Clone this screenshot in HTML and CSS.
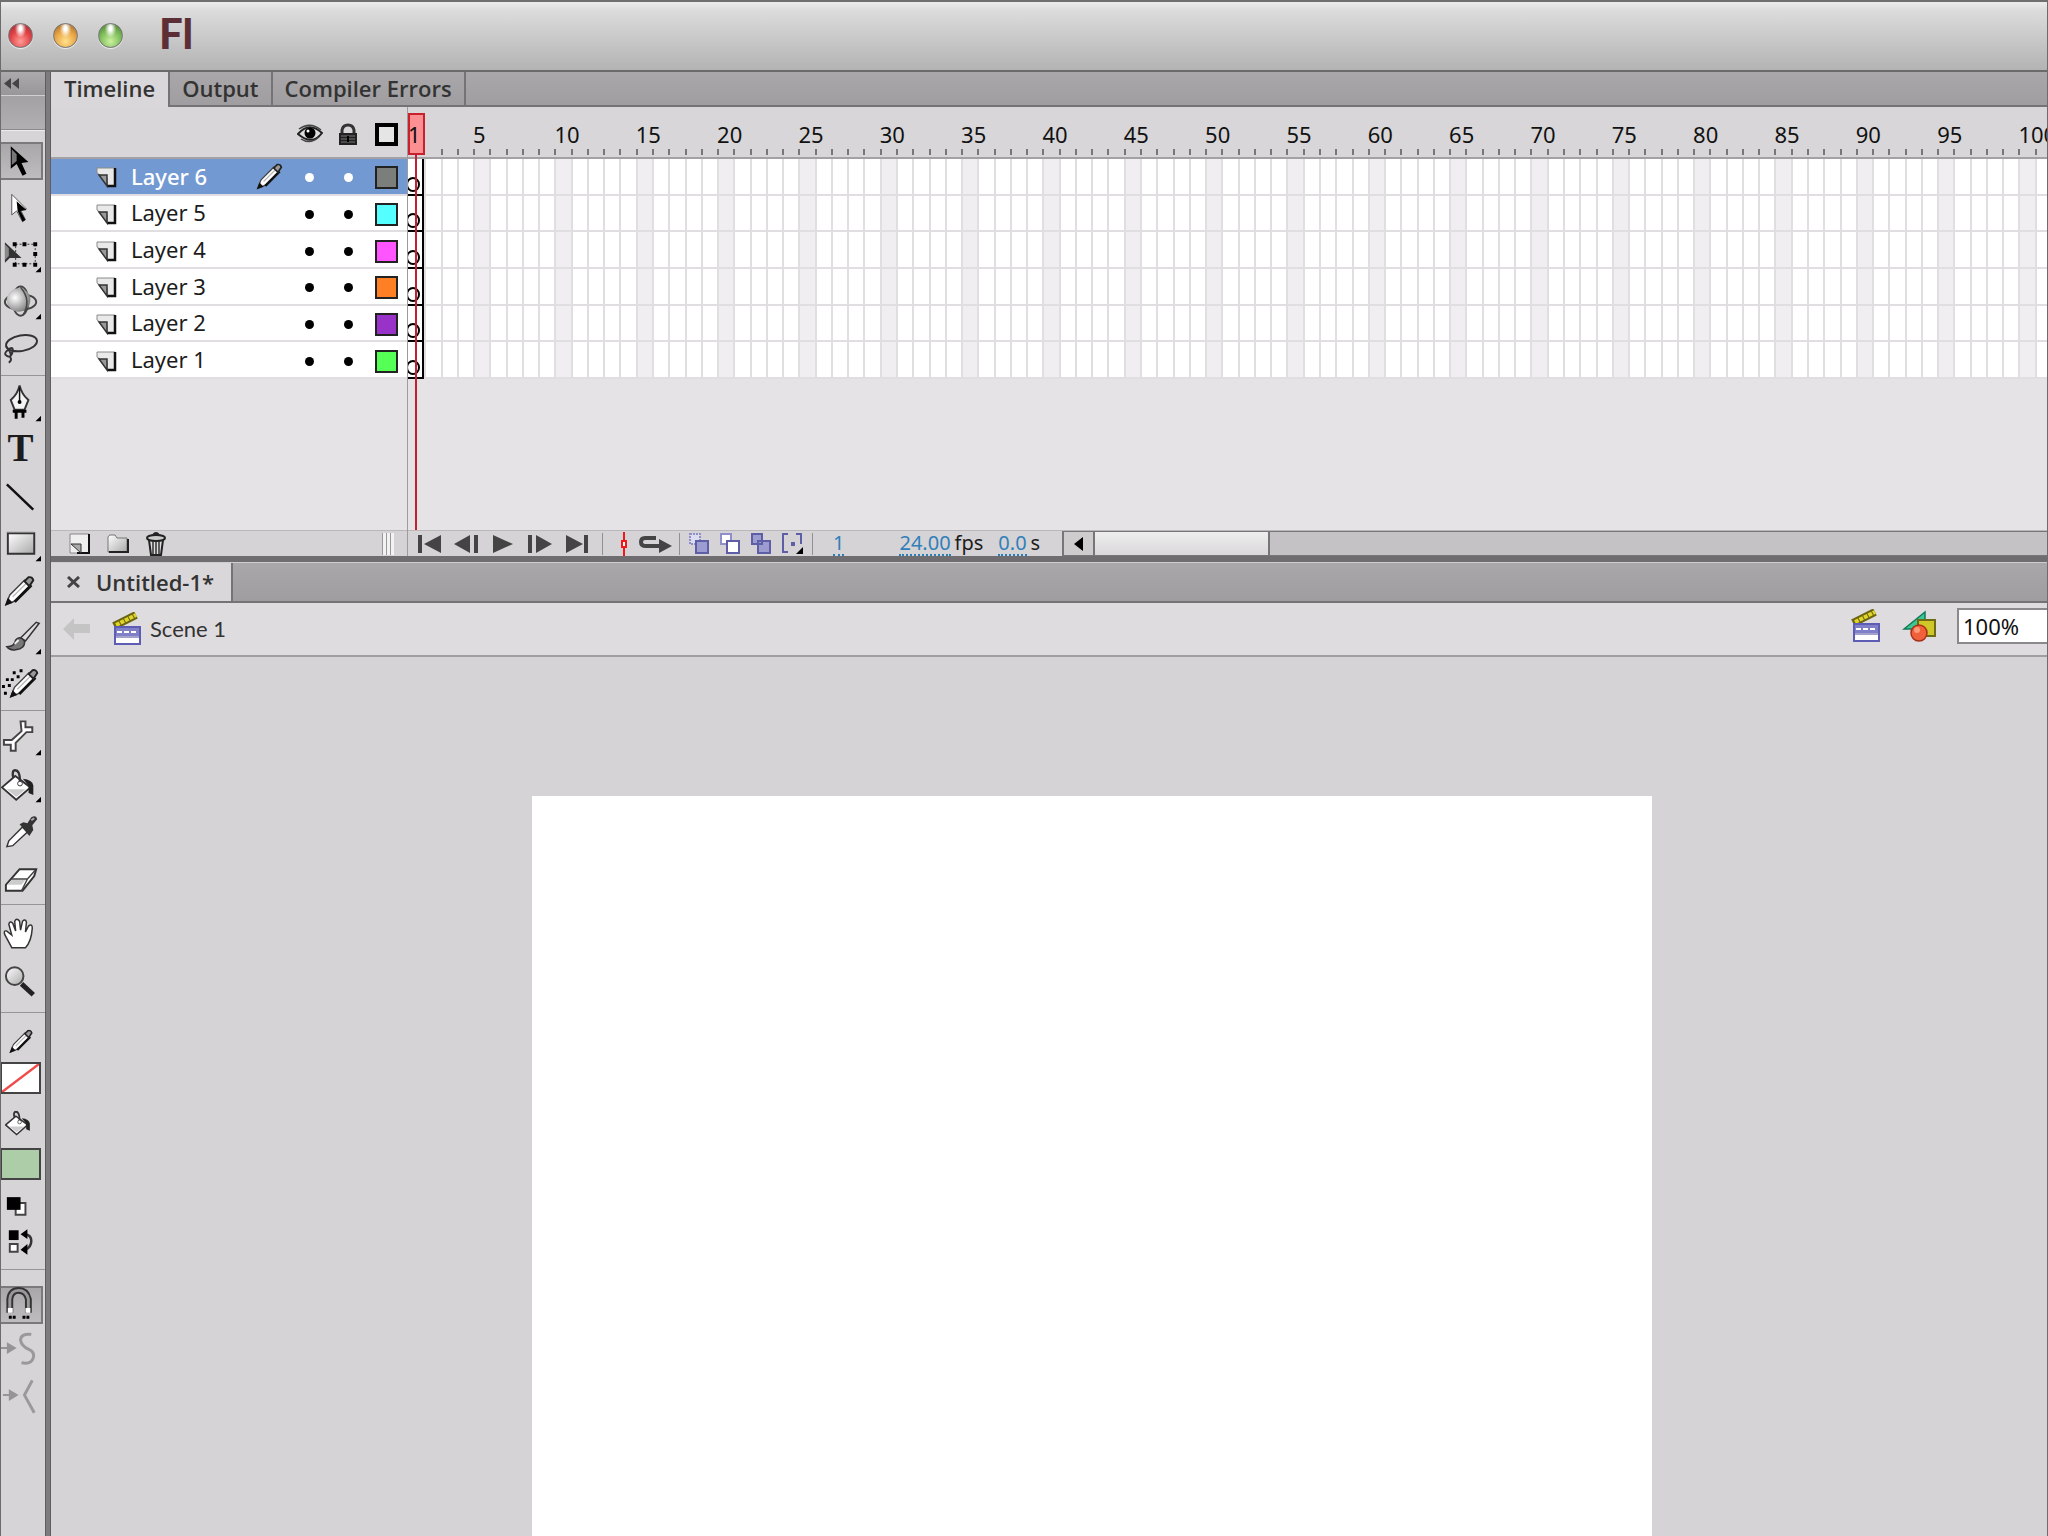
FILE: index.html
```html
<!DOCTYPE html>
<html lang="en">
<head>
<meta charset="utf-8">
<title>Fl</title>
<link rel="stylesheet" href="styles.css">
</head>
<body>
<svg class="defs" aria-hidden="true">
  <defs>
    <linearGradient id="metal" x1="0" y1="0" x2="1" y2="1"><stop offset="0" stop-color="#fff"/><stop offset="1" stop-color="#a9a9a9"/></linearGradient>
    <radialGradient id="ball" cx=".35" cy=".4" r=".7"><stop offset="0" stop-color="#fff"/><stop offset="1" stop-color="#777"/></radialGradient>
    <symbol id="corner" viewBox="0 0 6 6"><path d="M6 0v6H0z"/></symbol>
    <symbol id="page" viewBox="0 0 22 22">
      <path d="M1 1h18v18h-8v-8H8L1 6z" fill="#e9e9e9" stroke="#8a8a8a"/>
      <path d="M19 1v18h-8" fill="none" stroke="#111" stroke-width="2.500"/>
      <path d="M3 8h8v11z" fill="#999" stroke="#333" stroke-width="1.500"/>
    </symbol>
    <symbol id="clapper" viewBox="0 0 30 34">
      <path d="M2 14L24 3" stroke="#6b6410" stroke-width="8"/>
      <path d="M4 13L24 3" stroke="#e0d62a" stroke-width="4" stroke-dasharray="4 1"/>
      <rect x="3" y="15" width="25" height="17" fill="#fff" stroke="#5d5db5" stroke-width="2"/>
      <path d="M4 16h23v8H4z" fill="#8080c8"/>
      <path d="M5 20h21" stroke="#fff" stroke-width="2" stroke-dasharray="5 2"/>
      <path d="M4 25h23" stroke="#44449a"/>
    </symbol>
    <symbol id="pencil" viewBox="0 0 32 32">
      <path d="M2 30l4-10L21 5l6 6-15 15z" fill="#fff" stroke="#444" stroke-width="1.500"/>
      <path d="M11 27L28 10" stroke="#111" stroke-width="3"/>
      <path d="M9 22L23 8" stroke="#bbb" stroke-width="1.500"/>
      <path d="M21 6l4-4q4-1 5 3l-4 6z" fill="#999" stroke="#222" stroke-width="2"/>
      <path d="M1 31l3-8 5 5z" fill="#111"/>
    </symbol>
    <symbol id="bucket" viewBox="0 0 36 36">
      <path d="M1 20L15 8l16 12-15 13z" fill="#fff" stroke="#333" stroke-width="2"/>
      <path d="M13 10q-2-8 2-8 5 0 5 12" fill="none" stroke="#333" stroke-width="2.500"/>
      <circle cx="20" cy="16" r="2.500" fill="#fff" stroke="#333"/>
      <path d="M23 11q10 1 11 7v10l-5-2v-8z" fill="#222"/>
      <path d="M6 22l10 8 10-8z" fill="#ccc"/>
    </symbol>
  </defs>
</svg>

<div class="app">
  <header class="titlebar">
    <button class="light red" aria-label="Close"></button>
    <button class="light amber" aria-label="Minimise"></button>
    <button class="light green" aria-label="Zoom"></button>
    <span class="logo">Fl</span>
  </header>

  <div class="workspace">
    <aside class="tools">
      <button class="collapse" aria-label="Collapse panel"><svg width="15" height="11"><path d="M7 0v11L0 5.500zM15 0v11L8 5.500z" fill="#444"/></svg></button>
      <div class="grip-box"></div>
      <div class="group first">
        <button class="tool active" aria-label="Selection"><svg viewBox="0 0 45 47"><path d="M10 8v23l6-5 6 12 4-2-5-11 7-1z"/><path d="M11 11v16l5-4v-7z" fill="#777"/></svg></button>
        <button class="tool" aria-label="Subselection"><svg viewBox="0 0 45 47"><path d="M11 9v21l5-4 6 11 3-2-5-10 6-1z" fill="#fff" stroke="#555"/><path d="M16 16l10 9-6 1 5 9-3 2-5-11z"/></svg></button>
        <button class="tool" aria-label="Free transform"><svg viewBox="0 0 45 47"><path d="M15 12h20v20H15z" fill="none" stroke="#333" stroke-dasharray="2 2"/><path d="M4 10v21l5-5h12z" fill="#333"/><path d="M4 12v16l4-4v-8z" fill="#888"/><path d="M12 10h4v4h-4zM22 10h4v4h-4zM33 10h4v4h-4zM33 20h4v4h-4zM12 31h4v4h-4zM22 31h4v4h-4zM33 31h4v4h-4z"/><use href="#corner" x="35" y="35" width="6" height="6"/></svg></button>
        <button class="tool" aria-label="3D rotation"><svg viewBox="0 0 45 47"><ellipse cx="20" cy="23" rx="16" ry="8" fill="none" stroke="#444" stroke-width="2"/><ellipse cx="20" cy="22" rx="8" ry="15" fill="none" stroke="#444" stroke-width="2"/><circle cx="18" cy="21" r="12" fill="url(#ball)"/><path d="M20 8q12 14 2 29" fill="none" stroke="#444" stroke-width="1.500"/><use href="#corner" x="35" y="35" width="6" height="6"/></svg></button>
        <button class="tool" aria-label="Lasso"><svg viewBox="0 0 45 47"><ellipse cx="21" cy="17" rx="16" ry="8" transform="rotate(-10 21 17)" fill="none" stroke="#333" stroke-width="2"/><path d="M5 20q5 6 5 9t-4 1 1-6 5 0-3 7q3 3-1 6" fill="none" stroke="#333" stroke-width="2"/></svg></button>
      </div>
      <div class="group">
        <button class="tool" aria-label="Pen"><svg viewBox="0 0 45 47"><path d="M19 6q2 9 9 15l-4 10H14l-4-10q7-6 9-15z" fill="#f4f4f4" stroke="#333" stroke-width="2"/><path d="M19 8v15" stroke="#111" stroke-width="1.500"/><circle cx="19" cy="23" r="2"/><path d="M12 31h14v3H12zM14 34h3v6h-3zM21 34h3v5h-3z"/><use href="#corner" x="35" y="37" width="6" height="6"/></svg></button>
        <button class="tool letter" aria-label="Text">T</button>
        <button class="tool" aria-label="Line"><svg viewBox="0 0 45 47"><path d="M6 11l27 26" stroke="#111" stroke-width="2.500"/></svg></button>
        <button class="tool" aria-label="Rectangle"><svg viewBox="0 0 45 47"><path d="M7 13h27v21H7z" fill="url(#metal)" stroke="#333" stroke-width="2"/><path d="M6 12h28" stroke="#888"/><use href="#corner" x="35" y="36" width="6" height="6"/></svg></button>
        <button class="tool" aria-label="Pencil"><svg viewBox="0 0 45 47"><use href="#pencil" x="3" y="8" width="32" height="32"/></svg></button>
        <button class="tool" aria-label="Brush"><svg viewBox="0 0 45 47"><path d="M20 24L36 8l3 1-14 18z" fill="#ddd" stroke="#333" stroke-width="1.500"/><path d="M6 33q8 0 9-7 4-5 9 1 1 8-9 9-6 1-9-3z" fill="#777" stroke="#333" stroke-width="1.500"/><path d="M14 30l4-4" stroke="#eee" stroke-width="2"/><use href="#corner" x="35" y="35" width="6" height="6"/></svg></button>
        <button class="tool" aria-label="Spray brush"><svg viewBox="0 0 45 47"><path d="M5 17h3v3H5zM12 10h3v3h-3zM19 8h3v3h-3zM10 17h3v3h-3zM16 14h3v3h-3zM1 24h3v3H1zM7 23h3v3H7zM3 31h3v3H3z"/><use href="#pencil" x="8" y="7" width="31" height="31"/></svg></button>
      </div>
      <div class="group">
        <button class="tool" aria-label="Bone"><svg viewBox="0 0 45 47"><path d="M20 7h5v6h7v5h-6L15 29v8h-5v-6H3v-5h8l10-9z" fill="#fff" stroke="#444" stroke-width="2"/><use href="#corner" x="35" y="36" width="6" height="6"/></svg></button>
        <button class="tool" aria-label="Paint bucket"><svg viewBox="0 0 45 47"><use href="#bucket" x="0" y="7" width="35" height="35"/><use href="#corner" x="35" y="36" width="6" height="6"/></svg></button>
        <button class="tool" aria-label="Eyedropper"><svg viewBox="0 0 45 47"><path d="M6 39l2-6 14-14 5 5-15 14z" fill="#fff" stroke="#333" stroke-width="1.500"/><path d="M19 16l4-2 4 1 4-6q5-3 6 2l-5 6 1 5-4 6z" fill="#333"/><path d="M31 12l3-2" stroke="#aaa" stroke-width="2"/></svg></button>
        <button class="tool" aria-label="Eraser"><svg viewBox="0 0 45 47"><path d="M5 30L19 14h17l-2 7-12 15H5z" fill="#fff" stroke="#333" stroke-width="2"/><path d="M11 24h16l-6 12M27 24l8-9" fill="none" stroke="#444" stroke-width="1.500"/><path d="M6 30l5-5h14l-4 5z" fill="#ccc"/></svg></button>
      </div>
      <div class="group hand-group">
        <button class="tool" aria-label="Hand"><svg viewBox="0 0 45 47"><path d="M11 38L4 25q-2-5 2-4l5 4-3-11q1-4 4-1l3 8-1-10q2-4 5 0l1 9 2-9q3-3 4 1l-1 10 3-6q4-3 4 2-1 14-7 20z" fill="#fff" stroke="#333" stroke-width="1.500"/></svg></button>
        <button class="tool" aria-label="Zoom"><svg viewBox="0 0 45 47"><path d="M21 27l12 11" stroke="#222" stroke-width="5"/><circle cx="14" cy="19" r="9" fill="url(#metal)" stroke="#444" stroke-width="2"/></svg></button>
      </div>
      <div class="group colours">
        <button class="tool" aria-label="Stroke colour"><svg viewBox="0 0 45 47"><use href="#pencil" x="8" y="14" width="25" height="25"/></svg></button>
        <button class="chip none" aria-label="No stroke"><svg viewBox="0 0 37 30" preserveAspectRatio="none"><path d="M0 30L37 0" stroke="#f04a4a" stroke-width="2.500"/></svg></button>
        <button class="tool fill-tool" aria-label="Fill colour"><svg viewBox="0 0 45 54"><use href="#bucket" x="4" y="16" width="27" height="27"/></svg></button>
        <button class="chip filled" aria-label="Fill"></button>
        <button class="tool" aria-label="Black and white"><svg viewBox="0 0 45 47"><path d="M15 23h10v12H15z" fill="#fff" stroke="#444" stroke-width="2"/><path d="M6 17h14v13H6z"/></svg></button>
        <button class="tool swap" aria-label="Swap colours"><svg viewBox="0 0 45 30"><path d="M8 3h10v10H8z"/><path d="M9 17h8v8H9z" fill="#fff" stroke="#444" stroke-width="2"/><path d="M25 7q6 1 6 7t-6 9" fill="none" stroke="#333" stroke-width="2.500"/><path d="M20 7l7-5v10zM20 23l7-6v11z"/></svg></button>
      </div>
      <div class="group options">
        <button class="tool active" aria-label="Snap to objects"><svg viewBox="0 0 45 47"><path d="M9 31V17q1-9 9-9t10 9v14" fill="none" stroke="#333" stroke-width="7"/><path d="M9 31V17q1-9 9-9t10 9v14" fill="none" stroke="#999" stroke-width="3"/><path d="M7 26h5v5H7zM25 26h5v5h-5z" fill="#fff"/><path d="M8 34h3v3H8zM12 34h3v3h-3zM22 34h3v3h-3zM26 34h3v3h-3z"/></svg></button>
        <button class="tool" aria-label="Smooth"><svg viewBox="0 0 45 47"><path d="M0 18h6v-5l10 6-10 6v-5H0z" fill="#959595"/><path d="M31 5q-11-1-11 6 1 6 8 9t5 9q-2 7-12 5" fill="none" stroke="#999" stroke-width="3"/></svg></button>
        <button class="tool" aria-label="Straighten"><svg viewBox="0 0 45 47"><path d="M2 18h6v-5l10 6-10 6v-5H2z" fill="#959595"/><path d="M32 4l-8 15 10 18" fill="none" stroke="#999" stroke-width="3"/></svg></button>
      </div>
    </aside>

    <div class="divider"></div>

    <main class="panels">
      <section class="timeline">
        <nav class="tabs">
          <button class="tab current">Timeline</button>
          <button class="tab">Output</button>
          <button class="tab">Compiler Errors</button>
        </nav>
        <div class="timeline-body">
          <div class="layers">
            <div class="layer-head">
              <svg class="eye" width="26" height="20" viewBox="0 0 26 20"><path d="M1 10q11-13 24-1-10 13-24 1z" fill="#ddd" stroke="#222" stroke-width="2"/><circle cx="13" cy="9" r="5.500"/><circle cx="11" cy="7" r="1.500" fill="#fff"/><path d="M2 5q11-8 22 1M4 15q9 6 18-2" fill="none" stroke="#444" stroke-width="1.500"/></svg>
              <svg class="lock" width="20" height="23" viewBox="0 0 20 23"><path d="M4 11V7q1-5 6-5t6 5v4" fill="none" stroke="#333" stroke-width="3"/><path d="M1 10h18v12H1z" fill="#222"/><path d="M3 13h14M3 16h14M3 19h14" stroke="#777"/><path d="M9 13h2v6H9z" fill="#000"/></svg>
              <span class="outline"></span>
            </div>
            <ul class="layer-list" id="layers"></ul>
            <div class="layer-foot">
              <button aria-label="New layer"><svg width="22" height="22" viewBox="0 0 22 22"><path d="M1 1h19v19H1z" fill="#efefef" stroke="#888"/><path d="M20 1v19H8" fill="none" stroke="#111" stroke-width="2"/><path d="M2 11h10v9z" fill="#aaa" stroke="#333"/></svg></button>
              <button aria-label="New folder"><svg width="22" height="22" viewBox="0 0 22 22"><path d="M1 4q1-2 2-2h5l2 3h10v14H1z" fill="url(#metal)" stroke="#777"/><path d="M21 6v13H2" fill="none" stroke="#222" stroke-width="2"/></svg></button>
              <button aria-label="Delete"><svg width="22" height="24" viewBox="0 0 22 24"><path d="M4 8h14l-2 15H6z" fill="#ddd" stroke="#222" stroke-width="2"/><path d="M8 9v13M11 9v13M14 9v13" stroke="#333" stroke-width="1.500"/><ellipse cx="11" cy="6" rx="9" ry="3" fill="#ccc" stroke="#222" stroke-width="2"/><path d="M8 3q3-4 6 0" fill="none" stroke="#222" stroke-width="2"/></svg></button>
              <span class="grip"></span>
            </div>
          </div>
          <div class="frames">
            <div class="ruler" id="ruler"></div>
            <div class="grid" id="grid"></div>
            <div class="playhead"><span class="head"></span></div>
            <div class="frame-foot">
              <button class="play" aria-label="First frame"><svg width="24" height="20"><path d="M1 1h4v18H1zM24 1v18L7 10z"/></svg></button>
              <button class="play" aria-label="Step back"><svg width="24" height="20"><path d="M16 1v18L0 10zM20 1h4v18h-4z"/></svg></button>
              <button class="play" aria-label="Play"><svg width="24" height="20"><path d="M2 1v18l20-9z"/></svg></button>
              <button class="play" aria-label="Step forward"><svg width="24" height="20"><path d="M0 1h4v18H0zM8 1v18l16-9z"/></svg></button>
              <button class="play" aria-label="Last frame"><svg width="24" height="20"><path d="M1 1v18l17-9zM19 1h4v18h-4z"/></svg></button>
              <span class="sep"></span>
              <button class="centre" aria-label="Centre frame"><svg width="8" height="24"><path d="M4 0v24" stroke="#f01818" stroke-width="2"/><path d="M2 9h4v6H2z" fill="#fff" stroke="#f01818" stroke-width="2"/></svg></button>
              <button class="loop" aria-label="Loop"><svg width="34" height="20" viewBox="0 0 34 20"><path d="M18 4H7Q3 4 3 8t5 4h15" fill="none" stroke="#444" stroke-width="4"/><path d="M21 5l13 7-13 7z" fill="#444"/></svg></button>
              <span class="sep"></span>
              <div class="onion">
                <button aria-label="Onion skin"><svg width="21" height="21"><path d="M1 1h10v10H1z" fill="#dcdcf0" stroke="#8f8fcb" stroke-width="2" stroke-dasharray="2 1"/><path d="M7 8h12v12H7z" fill="#9c9cd0" stroke="#5e5ea6" stroke-width="2"/></svg></button>
                <button aria-label="Onion skin outlines"><svg width="21" height="21"><path d="M1 1h10v10H1z" fill="#fff" stroke="#8f8fcb" stroke-width="2"/><path d="M7 8h12v12H7z" fill="#fff" stroke="#5e5ea6" stroke-width="2"/></svg></button>
                <button aria-label="Edit multiple frames"><svg width="21" height="21"><path d="M1 1h10v10H1zM7 8h12v12H7z" fill="#9c9cd0" stroke="#5e5ea6" stroke-width="2"/></svg></button>
                <button aria-label="Modify markers"><svg width="21" height="21"><path d="M6 1H1v18h5M14 1h5v10" fill="none" stroke="#5e5ea6" stroke-width="2"/><path d="M9 9h4v4H9z" fill="#5e5ea6"/><path d="M21 14v7h-7z"/></svg></button>
              </div>
              <span class="sep"></span>
              <button class="hot current-frame">1</button>
              <div class="reading rate"><button class="hot">24.00</button><span>fps</span></div>
              <div class="reading"><button class="hot">0.0</button><span>s</span></div>
              <div class="scroller">
                <button class="scroll-left" aria-label="Scroll left"><svg width="9" height="14"><path d="M9 0v14L0 7z"/></svg></button>
                <div class="thumb"></div>
              </div>
            </div>
          </div>
        </div>
      </section>

      <section class="document">
        <nav class="tabs doc-tabs">
          <div class="tab current doc-tab"><button class="close" aria-label="Close document"><svg width="13" height="12"><path d="M1 1l11 10M12 1L1 11" stroke="#444" stroke-width="3"/></svg></button><span>Untitled-1*</span></div>
        </nav>
        <div class="edit-bar">
          <button class="back" aria-label="Back"><svg width="28" height="22"><path d="M0 11L11 0v6h16v9H11v7z" fill="#c5c4c5"/></svg></button>
          <svg width="30" height="34"><use href="#clapper"/></svg>
          <span class="scene">Scene 1</span>
          <div class="edit-right">
            <button aria-label="Edit scene"><svg width="30" height="34"><use href="#clapper"/></svg></button>
            <button aria-label="Edit symbols"><svg width="34" height="32" viewBox="0 0 34 32"><path d="M2 19L23 2v17z" fill="#3cc795" stroke="#137a58" stroke-width="1.500"/><path d="M16 10h17v16H16z" fill="#cfc62a" stroke="#6f6a16" stroke-width="2"/><circle cx="17" cy="23" r="8" fill="#f0603a" stroke="#a83018" stroke-width="1.500"/><circle cx="15" cy="20" r="3" fill="#ff9a78"/></svg></button>
            <input class="zoom" type="text" value="100%" aria-label="Zoom">
          </div>
        </div>
        <div class="pasteboard"><div class="stage"></div></div>
      </section>
    </main>
  </div>
</div>
<script src="app.js"></script>
</body>
</html>
```
FILE: styles.css
```css
* { box-sizing: border-box; }

body {
  margin: 0;
  font-family: "Noto Sans", "Open Sans", sans-serif;
  font-size: 22px;
  line-height: 28px;
  color: #1c1c1c;
  background: #d6d4d6;
}

button {
  margin: 0;
  padding: 0;
  border: 0;
  background: none;
  font: inherit;
  color: inherit;
}

svg { display: block; }
.defs { position: absolute; width: 0; height: 0; }

.app {
  display: flex;
  flex-direction: column;
  height: 100vh;
  overflow: hidden;
  border-left: 1px solid #6c6c6c;
  border-right: 1px solid #6c6c6c;
}

/* Title bar */
.titlebar {
  display: flex;
  flex: none;
  align-items: center;
  gap: 20px;
  height: 72px;
  padding: 0 7px 2px;
  border-top: 2px solid #6f6f6f;
  border-bottom: 2px solid #6a6a6a;
  background: linear-gradient(#ececec, #dcdcdc 12%, #b4b3b3);
}
.light {
  width: 25px;
  height: 25px;
  border: 1px solid #777;
  border-radius: 50%;
  box-shadow: 0 1px 1px #eee;
}
.red { background: radial-gradient(ellipse at 50% 20%, #fff 0 8%, transparent 35%), radial-gradient(circle at 50% 75%, #ff9d96, #e04347 50%, #8e2b2f); }
.amber { background: radial-gradient(ellipse at 50% 20%, #fff 0 8%, transparent 35%), radial-gradient(circle at 50% 75%, #ffe28e, #eaa544 50%, #8d6128); }
.green { background: radial-gradient(ellipse at 50% 20%, #fff 0 8%, transparent 35%), radial-gradient(circle at 50% 75%, #cdf2a0, #7fbd5c 50%, #47702f); }
.logo {
  margin-left: 16px;
  padding-bottom: 4px;
  font-family: Lato, sans-serif;
  font-size: 42px;
  font-weight: 900;
  line-height: 42px;
  color: #5c2f36;
}

.workspace {
  display: grid;
  flex: 1;
  grid-template-columns: 44px 6px minmax(0, 1fr);
  min-height: 0;
}
.divider {
  background: #7d7b7d;
  border-left: 1px solid #5e5e5e;
  border-right: 1px solid #5e5e5e;
}

/* Tools */
.tools { overflow: hidden; background: #d6d4d6; }
.collapse {
  display: flex;
  align-items: center;
  width: 100%;
  height: 23px;
  padding-left: 3px;
  background: linear-gradient(#acaaac, #989698);
}
.grip-box {
  height: 35px;
  border-top: 1px solid #d0d0d0;
  border-bottom: 1px solid #8a8a8a;
  background: linear-gradient(#a3a1a3, #b1afb1);
}
.group {
  padding: 3px 0 2px;
  border-bottom: 1px solid #979597;
}
.group.first { padding-top: 7px; border-top: 1px solid #ececec; }
.group.hand-group { padding: 5px 0 8px; }
.group.colours { padding: 2px 0 12px; }
.group.options { padding-top: 12px; border-bottom: 0; }
.tool {
  display: block;
  position: relative;
  width: 44px;
  height: 47px;
}
.tool svg { position: relative; width: 100%; height: 100%; overflow: visible; }
.tool.active::before {
  content: "";
  position: absolute;
  inset: 4px 2px 5px 0;
  border: 2px solid #7b797b;
  border-left: 0;
  background: linear-gradient(#a9a7a9, #bebcbe);
}
.tool.letter {
  padding: 0 5px 4px 0;
  font-family: "Liberation Serif", serif;
  font-size: 39px;
  font-weight: 700;
  line-height: 43px;
}
.fill-tool { height: 54px; }
.swap { height: 30px; }
.chip {
  display: block;
  width: 40px;
  height: 32px;
  border: 2px solid #444;
  border-left-width: 1px;
}
.chip svg { width: 100%; height: 100%; }
.chip.none { background: #fff; }
.chip.filled { background: #adcda9; }

/* Panels */
.panels { display: flex; flex-direction: column; min-width: 0; }
.tabs {
  display: flex;
  height: 35px;
  background: linear-gradient(#a9a7a9, #9f9d9f);
}
.tabs::after { content: ""; flex: 1; border-bottom: 2px solid #757375; }
.tab {
  padding: 0 12px 2px;
  border-right: 2px solid #757375;
  border-bottom: 2px solid #757375;
  font-family: "Open Sans", sans-serif;
  font-size: 22px;
  font-weight: 600;
  line-height: 28px;
  color: #333;
}
.tab.current { padding: 0 13px 4px; border-bottom: 0; background: #d9d7d9; }

.timeline { border-bottom: 6px solid #6f6d6f; }
.timeline-body { display: grid; grid-template-columns: 357px minmax(0, 1fr); background: #e5e3e5; }
.layers, .frames {
  display: grid;
  grid-template-rows: 52px 220px 151px 26px;
}
.layers { border-right: 1px solid #9c9c98; }
.frames { position: relative; overflow: hidden; }

.layer-head, .layer {
  display: grid;
  grid-template-columns: 35px 125px 34px 39px 38px 39px;
  align-items: center;
  padding-left: 45px;
}
.layer-head { padding-top: 4px; border-bottom: 2px solid #a3a1a3; background: #d8d6d8; }
.layer-head > * { justify-self: center; }
.eye { grid-column: 4; }
.outline { width: 23px; height: 23px; border: 4px solid #000; background: #e5e5e5; }
.layer-list {
  display: grid;
  grid-auto-rows: 1fr;
  margin: 0;
  padding: 0;
  list-style: none;
  background: #fff;
}
.layer { border-bottom: 2px solid #e0dee0; background: #fff; }
.layer span { padding-bottom: 1px; }
.layer.selected { background: #7399d2; color: #fff; font-weight: 500; }
.layer .page { margin-top: 4px; }
.dot { justify-self: center; width: 9px; height: 9px; margin-top: 3px; border-radius: 50%; background: #000; }
.selected .dot { background: #fff; }
.swatch { justify-self: center; width: 23px; height: 23px; margin-top: 3px; border: 2px solid #222; }
.gray { background: #7c7e7c; }
.cyan { background: #55ffff; }
.magenta { background: #ff55ff; }
.orange { background: #ff8024; }
.purple { background: #9932c8; }
.lime { background: #55ff55; }

.layer-foot {
  display: flex;
  grid-row: 4;
  align-items: center;
  gap: 16px;
  padding: 0 13px 0 18px;
  border-top: 1px solid #b9b7b9;
  background: #d5d3d5;
}
.grip {
  width: 12px;
  height: 22px;
  margin-left: auto;
  background: repeating-linear-gradient(90deg, #999 0 1px, #f2f2f2 1px 4px);
}

/* Frames: the last one runs off the right edge */
.ruler, .row { display: grid; grid-auto-columns: minmax(0, 1fr); grid-auto-flow: column; width: calc(100% + 4px); }
.ruler { border-bottom: 2px solid #a3a1a3; background: #d8d6d8; }
.tick {
  display: flex;
  flex-direction: column;
  justify-content: space-between;
  padding-top: 13px;
  white-space: nowrap;
  color: #111;
}
.tick span { position: relative; z-index: 1; height: 28px; }
.tick::after { content: ""; width: 2px; height: 6px; margin-bottom: 2px; background: #777; }
.tick:first-child::after, .tick:nth-child(2)::after { visibility: hidden; }
.grid { display: grid; grid-auto-rows: 1fr; background: #fff; }
.frame { border-left: 2px solid #e0dee0; border-bottom: 2px solid #e0dee0; }
.frame:nth-child(5n) { background: #f0eef0; }
.frame.key {
  display: flex;
  align-items: flex-end;
  justify-content: flex-end;
  border-left: 0;
  border-right: 2px solid #000;
  border-bottom-color: #000;
  padding: 0 2px 2px 0;
}
.frame.key::after { content: ""; flex: none; width: 10px; height: 11px; border: 2px solid #000; border-radius: 50%; }
.playhead {
  position: absolute;
  top: 6px;
  bottom: 26px;
  left: 0;
  width: 17px;
  background: linear-gradient(#c4202f, #c4202f) 7px 0 / 2px 100% no-repeat;
}
.head {
  display: block;
  height: 42px;
  border: 2px solid #c8202c;
  background: #fb8f91;
}

.frame-foot {
  display: flex;
  grid-row: 4;
  align-items: center;
  padding-left: 2px;
  border-top: 1px solid #b9b7b9;
  background: #d5d3d5;
  font-size: 20px;
  line-height: 22px;
}
.frame-foot button { display: flex; flex: none; align-items: center; justify-content: center; }
.play { width: 37px; fill: #444; }
.centre { width: 27px; }
.loop { width: 35px; }
.sep { width: 1px; height: 22px; margin: 0 7px; background: #929092; }
.onion { display: flex; gap: 10px; padding: 0 2px; }
.frame-foot .hot { border-bottom: 2px dotted #2c7fb4; color: #3080ba; }
.current-frame { margin: 0 55px 0 13px; }
.reading { display: flex; gap: 4px; }
.rate { margin-right: 15px; }
.scroller {
  display: flex;
  flex: 1;
  align-self: stretch;
  margin-left: 22px;
  border: 2px solid #777577;
  border-width: 1px 0 1px 2px;
  background: #c4c2c4;
}
.frame-foot .scroll-left { width: 31px; border-right: 2px solid #777577; background: #cecccd; }
.thumb { width: 175px; border-right: 2px solid #777577; background: linear-gradient(#eee, #dad8da); }

/* Document */
.document { display: flex; flex: 1; flex-direction: column; min-height: 0; }
.doc-tabs { flex: none; height: 41px; border-top: 1px solid #cfcdcf; border-bottom: 2px solid #757375; }
.doc-tabs::after { border: 0; }
.tab.doc-tab { display: flex; align-items: center; gap: 16px; padding: 0 17px 0 16px; }
.edit-bar {
  display: flex;
  flex: none;
  align-items: center;
  height: 54px;
  padding-left: 12px;
  border-bottom: 2px solid #a09ea0;
  background: #dedcde;
}
.back { margin-right: 21px; }
.scene { margin-left: 8px; font-family: Lato, sans-serif; color: #333; }
.edit-right { display: flex; align-items: center; gap: 21px; margin-left: auto; padding-bottom: 6px; }
.zoom {
  width: 90px;
  height: 36px;
  padding: 0 4px;
  border: 2px solid #8b898b;
  border-right: 0;
  background: #fff;
  font: inherit;
  color: #111;
}
.pasteboard {
  display: grid;
  flex: 1;
  grid-template-columns: 481fr 1119fr 395fr;
  padding-top: 139px;
  background: #d5d3d6;
}
.stage { grid-column: 2; background: #fff; }
```
FILE: app.js
```js
const FRAMES = 101;
const LAYERS = [
  ["Layer 6", "gray"],
  ["Layer 5", "cyan"],
  ["Layer 4", "magenta"],
  ["Layer 3", "orange"],
  ["Layer 2", "purple"],
  ["Layer 1", "lime"],
];

document.getElementById("layers").innerHTML = LAYERS.map(([name, colour], i) => `
  <li class="layer${i === 0 ? " selected" : ""}">
    <svg class="page" width="22" height="22"><use href="#page"/></svg>
    <span>${name}</span>
    ${i === 0 ? '<svg width="27" height="27"><use href="#pencil"/></svg>' : "<i></i>"}
    <button class="dot" aria-label="Show ${name}"></button>
    <button class="dot" aria-label="Lock ${name}"></button>
    <button class="swatch ${colour}" aria-label="Outline ${name}"></button>
  </li>`).join("");

let ticks = "";
let cells = "";
for (let f = 1; f <= FRAMES; f++) {
  const label = f === 1 || f % 5 === 0 ? f : "";
  ticks += `<div class="tick"><span>${label}</span></div>`;
  cells += `<div class="frame${f === 1 ? " key" : ""}"></div>`;
}
document.getElementById("ruler").innerHTML = ticks;
document.getElementById("grid").innerHTML = LAYERS.map(() => `<div class="row">${cells}</div>`).join("");
```
